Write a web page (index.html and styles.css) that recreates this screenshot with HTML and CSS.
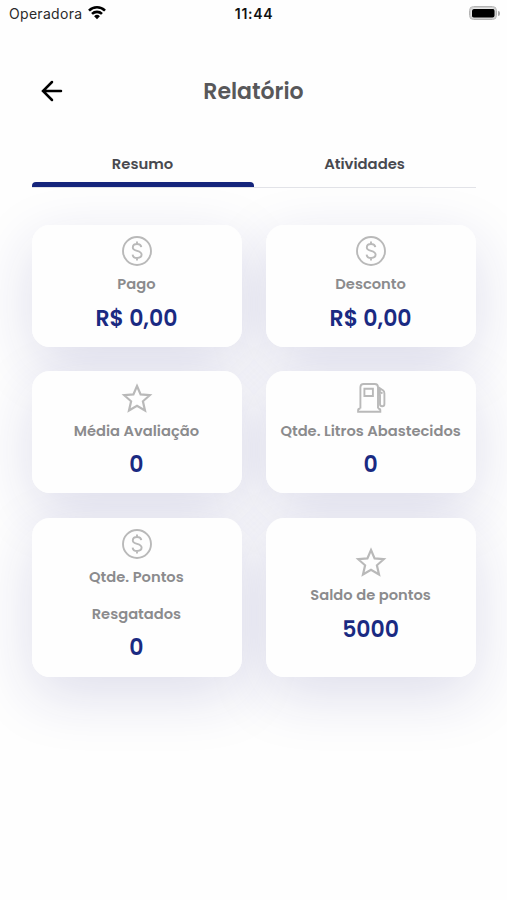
FILE: index.html
```html
<!DOCTYPE html>
<html lang="pt-BR">
<head>
<meta charset="utf-8">
<meta name="viewport" content="width=device-width, initial-scale=1">
<title>Relatório</title>
<link rel="stylesheet" href="styles.css">
</head>
<body>
<svg class="defs" aria-hidden="true">
  <symbol id="coin" viewBox="0 0 32 32"><circle cx="16" cy="16" r="14"/><path d="M20.300 12.200c-.3-2-1.900-3.200-4.200-3.200-2.500 0-4.300 1.300-4.300 3.400 0 4.600 8.800 2.400 8.800 7.200 0 2-1.800 3.400-4.500 3.400-2.500 0-4.300-1.300-4.500-3.400M16 6.500V9M16 23v2.500"/></symbol>
  <symbol id="star" viewBox="0 0 32 32"><path stroke-width="2.200" d="M16 4l3.600 8.400 9.200.8-6.900 6.100 2.100 9.200-8-4.800-8 4.800 2.100-9.200-6.900-6.100 9.200-.8z"/></symbol>
  <symbol id="pump" viewBox="0 0 32 32"><path d="M5.400 26.500V5.300q0-3.300 3.300-3.300h11q3.300 0 3.300 3.300v21.200M5.400 26.500q-2.300 0-2.300 1.800v1.400h22.200v-1.400q0-1.800-2.300-1.800M9.400 6.800h8.500v7.200H9.400zM23 11q2 .3 2 2.500v8.500q0 2.300 2.200 2.300t2.200-2.300V11.500q0-2-1.200-3L24.900 6.300v3.500l2.600 1.700"/></symbol>
</svg>

<header class="status">
  <div class="carrier"><span class="carrier-name">Operadora</span>
    <svg class="wifi" viewBox="0 0 20 15"><path d="M2 5.600a11.400 11.400 0 0 1 16 0M5 8.900a7.200 7.200 0 0 1 10 0"/><path class="dot" d="M10 14.200l-2.900-3a4.200 4.200 0 0 1 5.800 0z"/></svg>
  </div>
  <time class="clock">11:44</time>
  <div class="power"><span class="battery"></span><span class="tip"></span></div>
</header>

<nav class="topbar">
  <svg class="back" viewBox="0 0 22 22"><path d="M20 11H2.500M11 2L2 11l9 9"/></svg>
  <h1 class="title">Relatório</h1>
</nav>

<div class="tabs">
  <div class="tab active"><span>Resumo</span></div>
  <div class="tab"><span>Atividades</span></div>
</div>

<main class="cards">
  <section class="card"><svg class="icon"><use href="#coin"/></svg><p class="label">Pago</p><p class="value">R$ 0,00</p></section>
  <section class="card"><svg class="icon"><use href="#coin"/></svg><p class="label">Desconto</p><p class="value">R$ 0,00</p></section>
  <section class="card"><svg class="icon"><use href="#star"/></svg><p class="label">Média Avaliação</p><p class="value">0</p></section>
  <section class="card"><svg class="icon"><use href="#pump"/></svg><p class="label">Qtde. Litros Abastecidos</p><p class="value">0</p></section>
  <section class="card"><svg class="icon"><use href="#coin"/></svg><p class="label">Qtde. Pontos<br>Resgatados</p><p class="value">0</p></section>
  <section class="card"><svg class="icon"><use href="#star"/></svg><p class="label">Saldo de pontos</p><p class="value">5000</p></section>
</main>
</body>
</html>
```
FILE: styles.css
```css
* { box-sizing: border-box; }
body {
  margin: 0;
  min-height: 900px;
  background: #fefefe;
  font-family: Poppins, Inter, "Open Sans", sans-serif;
  overflow-x: hidden;
}
svg { display: block; fill: none; stroke: currentColor; }
.defs { width: 0; height: 0; position: absolute; }

.status {
  height: 28px;
  padding: 0 7px 2px 9px;
  display: grid;
  grid-template-columns: 1fr auto 1fr;
  align-items: center;
  font-family: Inter, sans-serif;
  font-size: 14px;
  color: #111;
}
.carrier { display: flex; align-items: center; gap: 5px; }
.carrier-name { letter-spacing: 0.3px; color: #2a2a2a; }
.wifi { width: 20px; height: 15px; stroke-width: 2.6; margin-top: -1px; color: #000; }
.wifi .dot { fill: currentColor; stroke: none; }
.clock { margin-right: 1px; font-weight: 600; letter-spacing: 0.7px; }
.power { display: flex; align-items: center; justify-content: flex-end; gap: 1px; }
.battery {
  width: 28px;
  height: 14px;
  border: 1px solid #b4b4b4;
  border-radius: 4.5px;
  background: #000 content-box;
  padding: 1.5px;
  box-shadow: inset 0 0 0 1.5px #d0d0d0;
}
.tip { width: 2px; height: 5px; border-radius: 0 3px 3px 0; background: #aaa; }

.topbar {
  height: 126px;
  padding: 0 41px;
  display: grid;
  grid-template-columns: 22px 1fr 22px;
  align-items: center;
}
.back { width: 22px; height: 22px; stroke-width: 2.5; stroke-linecap: round; color: #000; }
.title { margin: 2px 0 0; text-align: center; font-size: 22px; line-height: 32px; font-weight: 600; color: #58585a; }

.tabs {
  height: 34px;
  margin: 0 31px 0 32px;
  display: flex;
  border-bottom: 1px solid #e2e3e8;
}
.tab { flex: 1; text-align: center; font-size: 14.8px; line-height: 20px; font-weight: 600; color: #48494f; }
.tab span { margin-right: 1px; }
.tab.active::after {
  content: "";
  display: block;
  height: 5px;
  margin-top: 8px;
  border-radius: 4px 4px 0 0;
  background: #15257c;
}

.cards {
  margin: 37px 31px 0 32px;
  display: grid;
  grid-template-columns: 1fr 1fr;
  grid-template-rows: 122px 122px 159px;
  gap: 24.4px;
  isolation: isolate;
}
.card {
  position: relative;
  border-radius: 18px;
  background: #fefefe;
  display: flex;
  flex-direction: column;
  align-items: center;
  justify-content: center;
}
.card::before {
  content: "";
  position: absolute;
  inset: 0;
  z-index: -1;
  border-radius: 18px;
  box-shadow: 0 18px 60px rgba(35, 35, 130, 0.15);
}
.icon { width: 32px; height: 32px; margin-top: -2px; color: #b9b9b9; stroke-width: 1.9; }
.label { margin: -1px 1px 1px 0; text-align: center; white-space: nowrap; font-size: 14.7px; line-height: 36.6px; font-weight: 600; color: #8b8b8d; }
.value { margin: -1px 1px 1px 0; font-size: 22px; line-height: 31px; font-weight: 600; color: #1a2a82; }
```
